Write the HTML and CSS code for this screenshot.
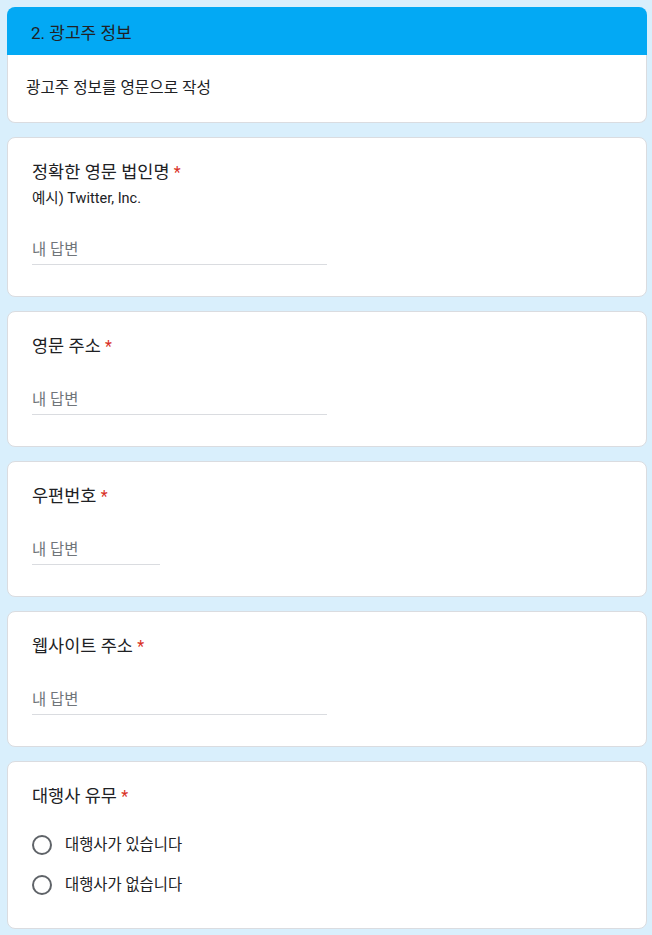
FILE: index.html
```html
<!DOCTYPE html>
<html lang="ko">
<head>
<meta charset="utf-8">
<title>광고주 정보</title>
<link rel="stylesheet" href="styles.css">
</head>
<body>
<main class="form">
  <section class="card card-header">
    <div class="band">2. 광고주 정보</div>
    <div class="band-body"><div class="band-desc">광고주 정보를 영문으로 작성</div></div>
  </section>

  <section class="card question">
    <div class="q-title">정확한 영문 법인명 <span class="req">*</span></div>
    <div class="q-desc">예시) Twitter, Inc.</div>
    <div class="answer answer-desc">내 답변</div>
  </section>

  <section class="card question">
    <div class="q-title">영문 주소 <span class="req">*</span></div>
    <div class="answer">내 답변</div>
  </section>

  <section class="card question">
    <div class="q-title">우편번호 <span class="req">*</span></div>
    <div class="answer answer-short">내 답변</div>
  </section>

  <section class="card question">
    <div class="q-title">웹사이트 주소 <span class="req">*</span></div>
    <div class="answer">내 답변</div>
  </section>

  <section class="card question question-radio">
    <div class="q-title">대행사 유무 <span class="req">*</span></div>
    <div class="options">
      <label class="option"><span class="radio"></span><span class="opt-label">대행사가 있습니다</span></label>
      <label class="option"><span class="radio"></span><span class="opt-label">대행사가 없습니다</span></label>
    </div>
  </section>
</main>
</body>
</html>
```

FILE: styles.css
```css
* { box-sizing: border-box; }

html, body {
  margin: 0;
  padding: 0;
}

body {
  background: #d9effc;
  font-family: Roboto, "Noto Sans CJK KR", sans-serif;
  color: #202124;
}

.form {
  width: 640px;
  margin: 0 0 0 7px;
  padding: 7px 0 6px;
  display: flex;
  flex-direction: column;
  gap: 14px;
}

.card {
  background: #ffffff;
  border: 1px solid #dadce0;
  border-radius: 8px;
}

.card-header {
  border: none;
  background: transparent;
}

.band {
  height: 48px;
  background: #03a9f4;
  border-radius: 8px 8px 0 0;
  padding-left: 24px;
  display: flex;
  align-items: center;
  font-size: 17px;
  color: #202124;
}

.band-body {
  background: #ffffff;
  border: 1px solid #dadce0;
  border-top: none;
  border-radius: 0 0 8px 8px;
  padding: 23px 18px 24px;
}

.band-desc {
  height: 20px;
  font-size: 15.7px;
  line-height: 20px;
}

.question {
  padding: 22px 24px 31px;
}

.q-title {
  height: 24px;
  font-size: 17.5px;
  line-height: 24px;
}

.req {
  color: #d93025;
  font-size: 16px;
  line-height: 1;
}

.q-desc {
  height: 20px;
  margin-top: 5px;
  font-size: 14.5px;
  line-height: 20px;
}

.answer {
  height: 27px;
  margin-top: 30px;
  width: 295px;
  font-size: 15.4px;
  line-height: 24px;
  color: #70757a;
  padding-bottom: 2px;
  border-bottom: 1px solid #dadce0;
}

.answer-desc {
  margin-top: 29px;
}

.answer-short {
  width: 128px;
}

.question-radio {
  padding-bottom: 23px;
}

.options {
  margin-top: 17px;
  display: flex;
  flex-direction: column;
}

.option {
  height: 40px;
  display: flex;
  align-items: center;
  gap: 13px;
}

.radio {
  width: 20px;
  height: 20px;
  border: 2px solid #5f6368;
  border-radius: 50%;
  flex: none;
}

.opt-label {
  font-size: 15.4px;
  line-height: 20px;
}
```
